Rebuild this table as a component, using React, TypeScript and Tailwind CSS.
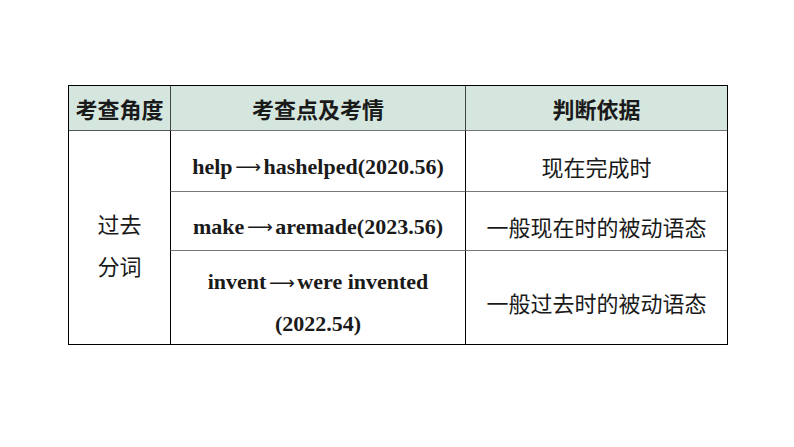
const Arrow = () => (
  <span className="inline-block w-[31px] text-center font-['DejaVu_Sans',sans-serif] font-normal text-[18px]">⟶</span>
);

export default function App() {
  const head =
    "bg-[#d4e6de] flex items-center justify-center text-[22px] font-bold font-['Noto_Sans_CJK_SC',sans-serif]";
  const en =
    "border-t border-l border-t-[#777] border-l-black flex items-center justify-center pt-[10px] text-[22px] font-bold font-['Liberation_Serif','Times_New_Roman',serif]";
  const zh =
    "border-t border-l border-t-[#777] border-l-black flex items-center justify-center pt-[10px] text-[22px] font-['Noto_Sans_CJK_SC',sans-serif]";

  return (
    <div className="w-[794px] h-[447px] bg-white pt-[85px] pl-[68px]">
      <div className="w-[660px] border border-black grid grid-cols-[101px_295px_262px] grid-rows-[44px_61px_59px_94px] text-[#1a1a1a]">
        {/* Header */}
        <div className={head}>考查角度</div>
        <div className={head + ' border-l border-[#444]'}>考查点及考情</div>
        <div className={head + ' border-l border-[#444]'}>判断依据</div>

        {/* Body */}
        <div className="row-span-3 border-t border-[#555] flex flex-col items-center justify-center pt-[12px] text-[22px] leading-[42px] font-['Noto_Sans_CJK_SC',sans-serif]">
          <span>过去</span>
          <span>分词</span>
        </div>

        <div className={en}>
          help<Arrow />hashelped(2020.56)
        </div>
        <div className={zh}>现在完成时</div>

        <div className={en}>
          make<Arrow />aremade(2023.56)
        </div>
        <div className={zh}>一般现在时的被动语态</div>

        <div className={en + ' flex-col leading-[41px]'}>
          <span>
            invent<Arrow />were invented
          </span>
          <span>(2022.54)</span>
        </div>
        <div className={zh}>一般过去时的被动语态</div>
      </div>
    </div>
  );
}
